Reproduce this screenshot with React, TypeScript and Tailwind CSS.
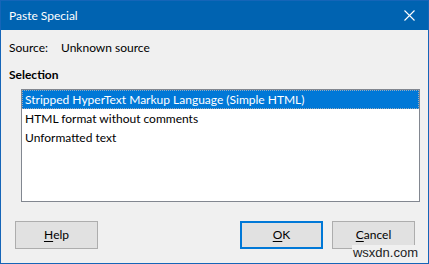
import React from 'react';

const items = [
  'Stripped HyperText Markup Language (Simple HTML)',
  'HTML format without comments',
  'Unformatted text',
];

// Windows-style push button with an underlined access key
function DialogButton({ label, hotkey, focused }: { label: string; hotkey: number; focused?: boolean }) {
  return (
    <button
      className={
        'w-[83px] h-[28px] bg-[#e1e1e1] text-[12px] text-black flex items-center justify-center ' +
        (focused ? 'border-2 border-[#0078d7]' : 'border border-[#adadad]')
      }
    >
      {label.slice(0, hotkey)}
      <span className="underline underline-offset-2">{label[hotkey]}</span>
      {label.slice(hotkey + 1)}
    </button>
  );
}

export default function App() {
  return (
    <div
      className="relative w-[429px] h-[264px] bg-[#f0f0f0] border border-[#1565b8] flex flex-col text-[12px] text-black"
      style={{ fontFamily: 'Lato, "Noto Sans", sans-serif' }}
    >
      {/* Title bar */}
      <div className="h-[29px] bg-[#0063b1] flex items-center justify-between pl-[8px] pr-[13px] text-white">
        <span className="text-[12px]">Paste Special</span>
        <svg width="11" height="11" viewBox="0 0 11 11" className="text-white">
          <path d="M0.5 0.5 L10.5 10.5 M10.5 0.5 L0.5 10.5" stroke="currentColor" strokeWidth="1.1" />
        </svg>
      </div>

      {/* Source line */}
      <div className="flex mt-[10px] pl-[8px] h-[16px] items-center">
        <span className="w-[52px]">Source:</span>
        <span>Unknown source</span>
      </div>

      <div className="mt-[11px] pl-[8px] h-[16px] flex items-center font-bold">Selection</div>

      {/* List box */}
      <div className="mt-[6px] ml-[20px] w-[399px] h-[113px] bg-white border border-[#828790] flex flex-col">
        {items.map((item, i) => (
          <div
            key={item}
            className={
              'h-[19px] flex items-center pl-[2px] ' +
              (i === 0 ? 'bg-[#0078d7] text-white border border-dotted border-[#9ab]' : 'border border-transparent')
            }
          >
            {item}
          </div>
        ))}
      </div>

      {/* Buttons */}
      <div className="mt-[19px] flex items-center pl-[14px] pr-[13px]">
        <DialogButton label="Help" hotkey={0} />
        <div className="flex-1" />
        <div className="flex gap-[9px]">
          <DialogButton label="OK" hotkey={0} focused />
          <DialogButton label="Cancel" hotkey={0} />
        </div>
      </div>

      {/* watermark */}
      <span
        className="absolute right-[9px] bottom-[2px] text-[13px] leading-[16px] text-[#222] bg-[#f0f0f0] px-[1px]"
        style={{ fontFamily: '"Liberation Sans", Arial, sans-serif' }}
      >
        wsxdn.com
      </span>
    </div>
  );
}
